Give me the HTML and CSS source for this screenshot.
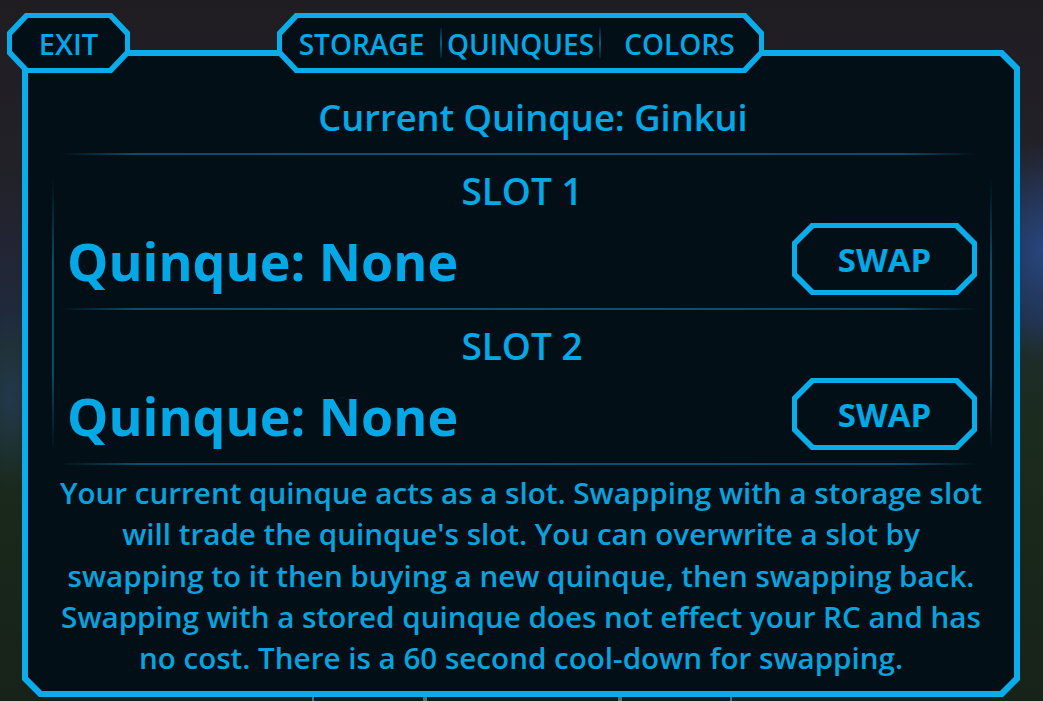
FILE: index.html
```html
<!DOCTYPE html>
<html lang="en">
<head>
<meta charset="utf-8">
<title>Quinque Storage</title>
<link rel="stylesheet" href="styles.css">
</head>
<body>
<div class="screen">
  <div class="tabs">
    <div class="tab tab-exit"><div class="tab-inner"><span class="tab-label">EXIT</span></div></div>
    <div class="tab tab-group">
      <div class="tab-inner">
        <span class="tab-label seg">STORAGE</span>
        <span class="divider"></span>
        <span class="tab-label seg">QUINQUES</span>
        <span class="divider"></span>
        <span class="tab-label seg">COLORS</span>
      </div>
    </div>
  </div>
  <div class="panel">
    <div class="panel-inner">
      <div class="title">Current Quinque: Ginkui</div>
      <div class="sep"></div>
      <div class="slots">
        <div class="slot">
          <div class="slot-label">SLOT 1</div>
          <div class="slot-row">
            <div class="slot-name">Quinque: None</div>
            <div class="btn"><div class="btn-inner">SWAP</div></div>
          </div>
        </div>
        <div class="sep"></div>
        <div class="slot">
          <div class="slot-label">SLOT 2</div>
          <div class="slot-row">
            <div class="slot-name">Quinque: None</div>
            <div class="btn"><div class="btn-inner">SWAP</div></div>
          </div>
        </div>
        <div class="sep"></div>
      </div>
      <p class="desc">Your current quinque acts as a slot. Swapping with a storage slot<br>will trade the quinque's slot. You can overwrite a slot by<br>swapping to it then buying a new quinque, then swapping back.<br>Swapping with a stored quinque does not effect your RC and has<br>no cost. There is a 60 second cool-down for swapping.</p>
    </div>
  </div>
  <div class="below">
    <div class="below-box b1"></div>
    <div class="below-box b2"></div>
    <div class="below-box b3"></div>
  </div>
</div>
</body>
</html>
```

FILE: styles.css
```css
* { box-sizing: border-box; }

html, body {
  margin: 0;
  padding: 0;
}

body {
  width: 1043px;
  height: 701px;
  overflow: hidden;
  font-family: "Open Sans", "Noto Sans", sans-serif;
  color: #04a8e6;
  background:
    radial-gradient(ellipse 60px 110px at 1040px 250px, rgba(40, 80, 150, 0.75), rgba(40, 80, 150, 0) 100%),
    radial-gradient(ellipse 40px 90px at 10px 400px, rgba(40, 70, 120, 0.5), rgba(40, 70, 120, 0) 100%),
    linear-gradient(180deg, #1f1d22 0px, #222127 160px, #232433 240px, #1f2a3c 320px, #1e2c2a 345px, #1b2b1d 430px, #172219 701px);
}

.screen {
  padding-top: 13px;
}

/* ---------- top tabs ---------- */
.tabs {
  display: flex;
  height: 60px;
  padding-left: 7px;
  position: relative;
  z-index: 2;
}

.tab {
  background: #0aacea;
  padding: 5px;
  clip-path: polygon(18px 0, calc(100% - 18px) 0, 100% 19px, 100% calc(100% - 19px), calc(100% - 18px) 100%, 18px 100%, 0 calc(100% - 19px), 0 19px);
}

.tab-inner {
  height: 100%;
  background: #030f17;
  clip-path: polygon(16px 0, calc(100% - 16px) 0, 100% 17px, 100% calc(100% - 17px), calc(100% - 16px) 100%, 16px 100%, 0 calc(100% - 17px), 0 17px);
  display: flex;
  align-items: center;
  justify-content: center;
}

.tab-exit {
  width: 123px;
}

.tab-group {
  width: 487px;
  margin-left: 147px;
}

.tab-group .tab-inner {
  justify-content: stretch;
  padding: 0 1px;
}

.tab-label {
  font-size: 28px;
  font-weight: 600;
  line-height: 1;
  padding-top: 1px;
}

.tab-exit .tab-label {
  font-size: 29px;
}

.seg {
  flex: 1;
  text-align: center;
}

.divider {
  width: 2px;
  height: 30px;
  background: linear-gradient(180deg, rgba(12, 90, 126, 0.2), #0d5d82 50%, rgba(12, 90, 126, 0.2));
}

/* ---------- main panel ---------- */
.panel {
  margin-top: -23px;
  margin-left: 22px;
  width: 998px;
  height: 647px;
  padding: 6px;
  background: #0aacea;
  clip-path: polygon(0 0, calc(100% - 17px) 0, 100% 17px, 100% calc(100% - 17px), calc(100% - 17px) 100%, 17px 100%, 0 calc(100% - 17px));
  position: relative;
  z-index: 1;
}

.panel-inner {
  height: 100%;
  background: #030f17;
  clip-path: polygon(0 0, calc(100% - 14px) 0, 100% 14px, 100% calc(100% - 14px), calc(100% - 14px) 100%, 14px 100%, 0 calc(100% - 14px));
  padding-top: 37px;
  display: flex;
  flex-direction: column;
}

.title {
  font-size: 36.3px;
  font-weight: 600;
  line-height: 48px;
  text-align: center;
  padding-left: 24px;
  white-space: nowrap;
}

.sep {
  height: 2px;
  margin: 0 38px 0 32px;
  background: linear-gradient(90deg, rgba(11, 80, 110, 0) 0%, #0b4d6a 8%, #0c5273 50%, #0b4d6a 92%, rgba(11, 80, 110, 0) 100%);
}

.panel-inner > .sep {
  margin-top: 12px;
}

.slots {
  margin: 0 22px 0 24px;
  border-left: 2px solid #0b3f58;
  border-right: 2px solid #0b3f58;
  border-image: linear-gradient(180deg, rgba(11, 70, 98, 0) 0%, rgba(11, 70, 98, 0) 8%, #0c4a68 35%, #0c4a68 70%, rgba(11, 70, 98, 0) 95%) 1;
  border-top: 0;
  border-bottom: 0;
}

.slots .sep {
  margin: 0 14px 0 6px;
}

.slot {
  padding: 16px 13px 13px 13px;
}

.slot-label {
  font-size: 37px;
  font-weight: 600;
  line-height: 40px;
  text-align: center;
}

.slot-row {
  margin-top: 12px;
  height: 72px;
  display: flex;
  align-items: center;
  justify-content: space-between;
}

.slot-name {
  font-size: 52px;
  font-weight: 700;
  line-height: 1;
  white-space: nowrap;
  padding-top: 4px;
}

.btn {
  width: 185px;
  height: 72px;
  padding: 5px;
  background: #0aacea;
  clip-path: polygon(19px 0, calc(100% - 19px) 0, 100% 19px, 100% calc(100% - 19px), calc(100% - 19px) 100%, 19px 100%, 0 calc(100% - 19px), 0 19px);
}

.btn-inner {
  height: 100%;
  background: #030f17;
  clip-path: polygon(17px 0, calc(100% - 17px) 0, 100% 17px, 100% calc(100% - 17px), calc(100% - 17px) 100%, 17px 100%, 0 calc(100% - 17px), 0 17px);
  display: flex;
  align-items: center;
  justify-content: center;
  font-size: 33px;
  font-weight: 700;
  padding-top: 1px;
}

.desc {
  margin: 7px 0 0 0;
  font-size: 29.6px;
  font-weight: 600;
  line-height: 41.3px;
  text-align: center;
  white-space: nowrap;
  color: #08a3de;
}

/* ---------- UI peeking below ---------- */
.below {
  display: flex;
  margin-left: 312px;
  height: 10px;
  margin-top: -2px;
}

.below-box {
  height: 10px;
  border: 2px solid #5d6a70;
  border-bottom: 0;
  background: #0d1a20;
}

.b1 { width: 113px; }
.b2 { width: 195px; }
.b3 { width: 112px; }
```
